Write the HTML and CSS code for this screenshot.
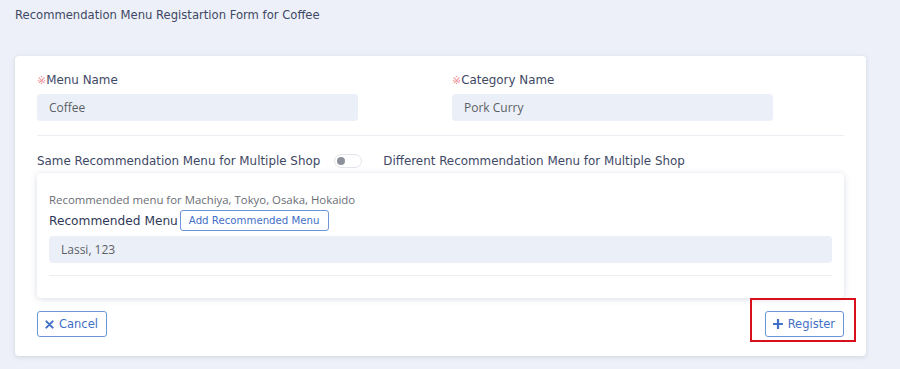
FILE: index.html
```html
<!DOCTYPE html>
<html>
<head>
<meta charset="utf-8">
<link rel="stylesheet" href="styles.css">
</head>
<body>
<div class="page">
  <h1 class="title">Recommendation Menu Registartion Form for Coffee</h1>
  <div class="card">
    <div class="row">
      <div class="field">
        <label class="label"><span class="req">※</span>Menu Name</label>
        <div class="input">Coffee</div>
      </div>
      <div class="field">
        <label class="label"><span class="req">※</span>Category Name</label>
        <div class="input">Pork Curry</div>
      </div>
    </div>
    <hr class="divider">
    <div class="toggle-row">
      <span class="label">Same Recommendation Menu for Multiple Shop</span>
      <span class="switch"><span class="knob"></span></span>
      <span class="label">Different Recommendation Menu for Multiple Shop</span>
    </div>
    <div class="inner">
      <p class="note">Recommended menu for Machiya, Tokyo, Osaka, Hokaido</p>
      <div class="rm-row">
        <span class="label strong">Recommended Menu</span>
        <button class="btn btn-sm">Add Recommended Menu</button>
      </div>
      <div class="input wide">Lassi, 123</div>
      <hr class="divider inner-div">
    </div>
    <div class="actions">
      <button class="btn btn-act"><svg width="9" height="9" viewBox="0 0 10 10"><path d="M1.5 1.5 L8.5 8.5 M8.5 1.5 L1.5 8.5" stroke="#3f6fc7" stroke-width="2.2" stroke-linecap="round"/></svg>Cancel</button>
      <button class="btn btn-act highlight"><svg width="10" height="10" viewBox="0 0 10 10"><path d="M5 0.8 V9.2 M0.8 5 H9.2" stroke="#3f6fc7" stroke-width="2.2" stroke-linecap="round"/></svg>Register</button>
    </div>
  </div>
</div>
</body>
</html>
```
FILE: styles.css
```css
* { box-sizing: border-box; }
html, body { margin: 0; padding: 0; }
body {
  background: #edf0f8;
  font-family: "DejaVu Sans", sans-serif;
  width: 900px;
  height: 369px;
  overflow: hidden;
}
.page {
  padding: 7px 34px 0 15px;
}
.title {
  margin: 0;
  font-size: 11.6px;
  font-weight: normal;
  color: #3e4865;
  line-height: 16px;
}
.card {
  margin-top: 33px;
  background: #fff;
  border-radius: 4px;
  box-shadow: 0 1px 4px rgba(120, 130, 160, 0.25);
  padding: 14px 22px 20px 22px;
  height: 300px;
}
.row {
  display: flex;
  gap: 94px;
}
.field { width: 321px; }
.label {
  font-size: 11.9px;
  color: #3e4865;
  line-height: 20px;
  display: block;
}
.strong { color: #2f3857; font-size: 12.2px; }
.req { color: #ef8d96; font-size: 11px; }
.input {
  margin-top: 3px;
  background: #ebeff7;
  border-radius: 4px;
  height: 27px;
  line-height: 27px;
  padding-left: 12px;
  font-family: "Open Sans", sans-serif;
  font-size: 12px;
  color: #5c5f66;
}
.divider {
  border: 0;
  border-top: 1px solid #eceef3;
  margin: 14px 0 0 0;
}
.toggle-row {
  display: flex;
  align-items: center;
  margin-top: 15px;
  height: 20px;
}
.toggle-row .label { display: inline; }
.switch {
  width: 28px;
  height: 14px;
  border: 1px solid #e2e5ec;
  border-radius: 8px;
  margin: 0 21px 0 14px;
  position: relative;
  background: #fff;
}
.knob {
  position: absolute;
  left: 2px;
  top: 2px;
  width: 8px;
  height: 8px;
  border-radius: 50%;
  background: #8c929c;
}
.inner {
  margin-top: 2px;
  box-shadow: 0 1px 6px rgba(120, 130, 160, 0.28);
  border-radius: 4px;
  padding: 19px 12px 22px 12px;
}
.note {
  margin: 0;
  font-family: "Open Sans", sans-serif;
  font-size: 11.4px;
  color: #6b6e75;
  line-height: 16px;
}
.rm-row {
  display: flex;
  align-items: center;
  margin-top: 2px;
  gap: 2px;
}
.rm-row .label { display: inline; }
.btn {
  background: #fff;
  border: 1px solid #6d95d8;
  color: #3f6fc7;
  border-radius: 3px;
  font-family: "DejaVu Sans", sans-serif;
  cursor: pointer;
}
.btn-sm {
  font-size: 10.2px;
  height: 21px;
  padding: 0 8px;
}
.wide { margin-top: 5px; }
.inner-div { margin-top: 12px; }
.actions {
  display: flex;
  justify-content: space-between;
  align-items: center;
  margin-top: 13px;
}
.btn-act {
  height: 26px;
  font-size: 11.5px;
  padding: 0 8px 0 7px;
  display: inline-flex;
  align-items: center;
  gap: 5px;
}
.highlight {
  position: relative;
}
.highlight::after {
  content: "";
  position: absolute;
  left: -16px;
  right: -13px;
  top: -14px;
  bottom: -6px;
  border: 2px solid #d8101c;
  pointer-events: none;
}
```
